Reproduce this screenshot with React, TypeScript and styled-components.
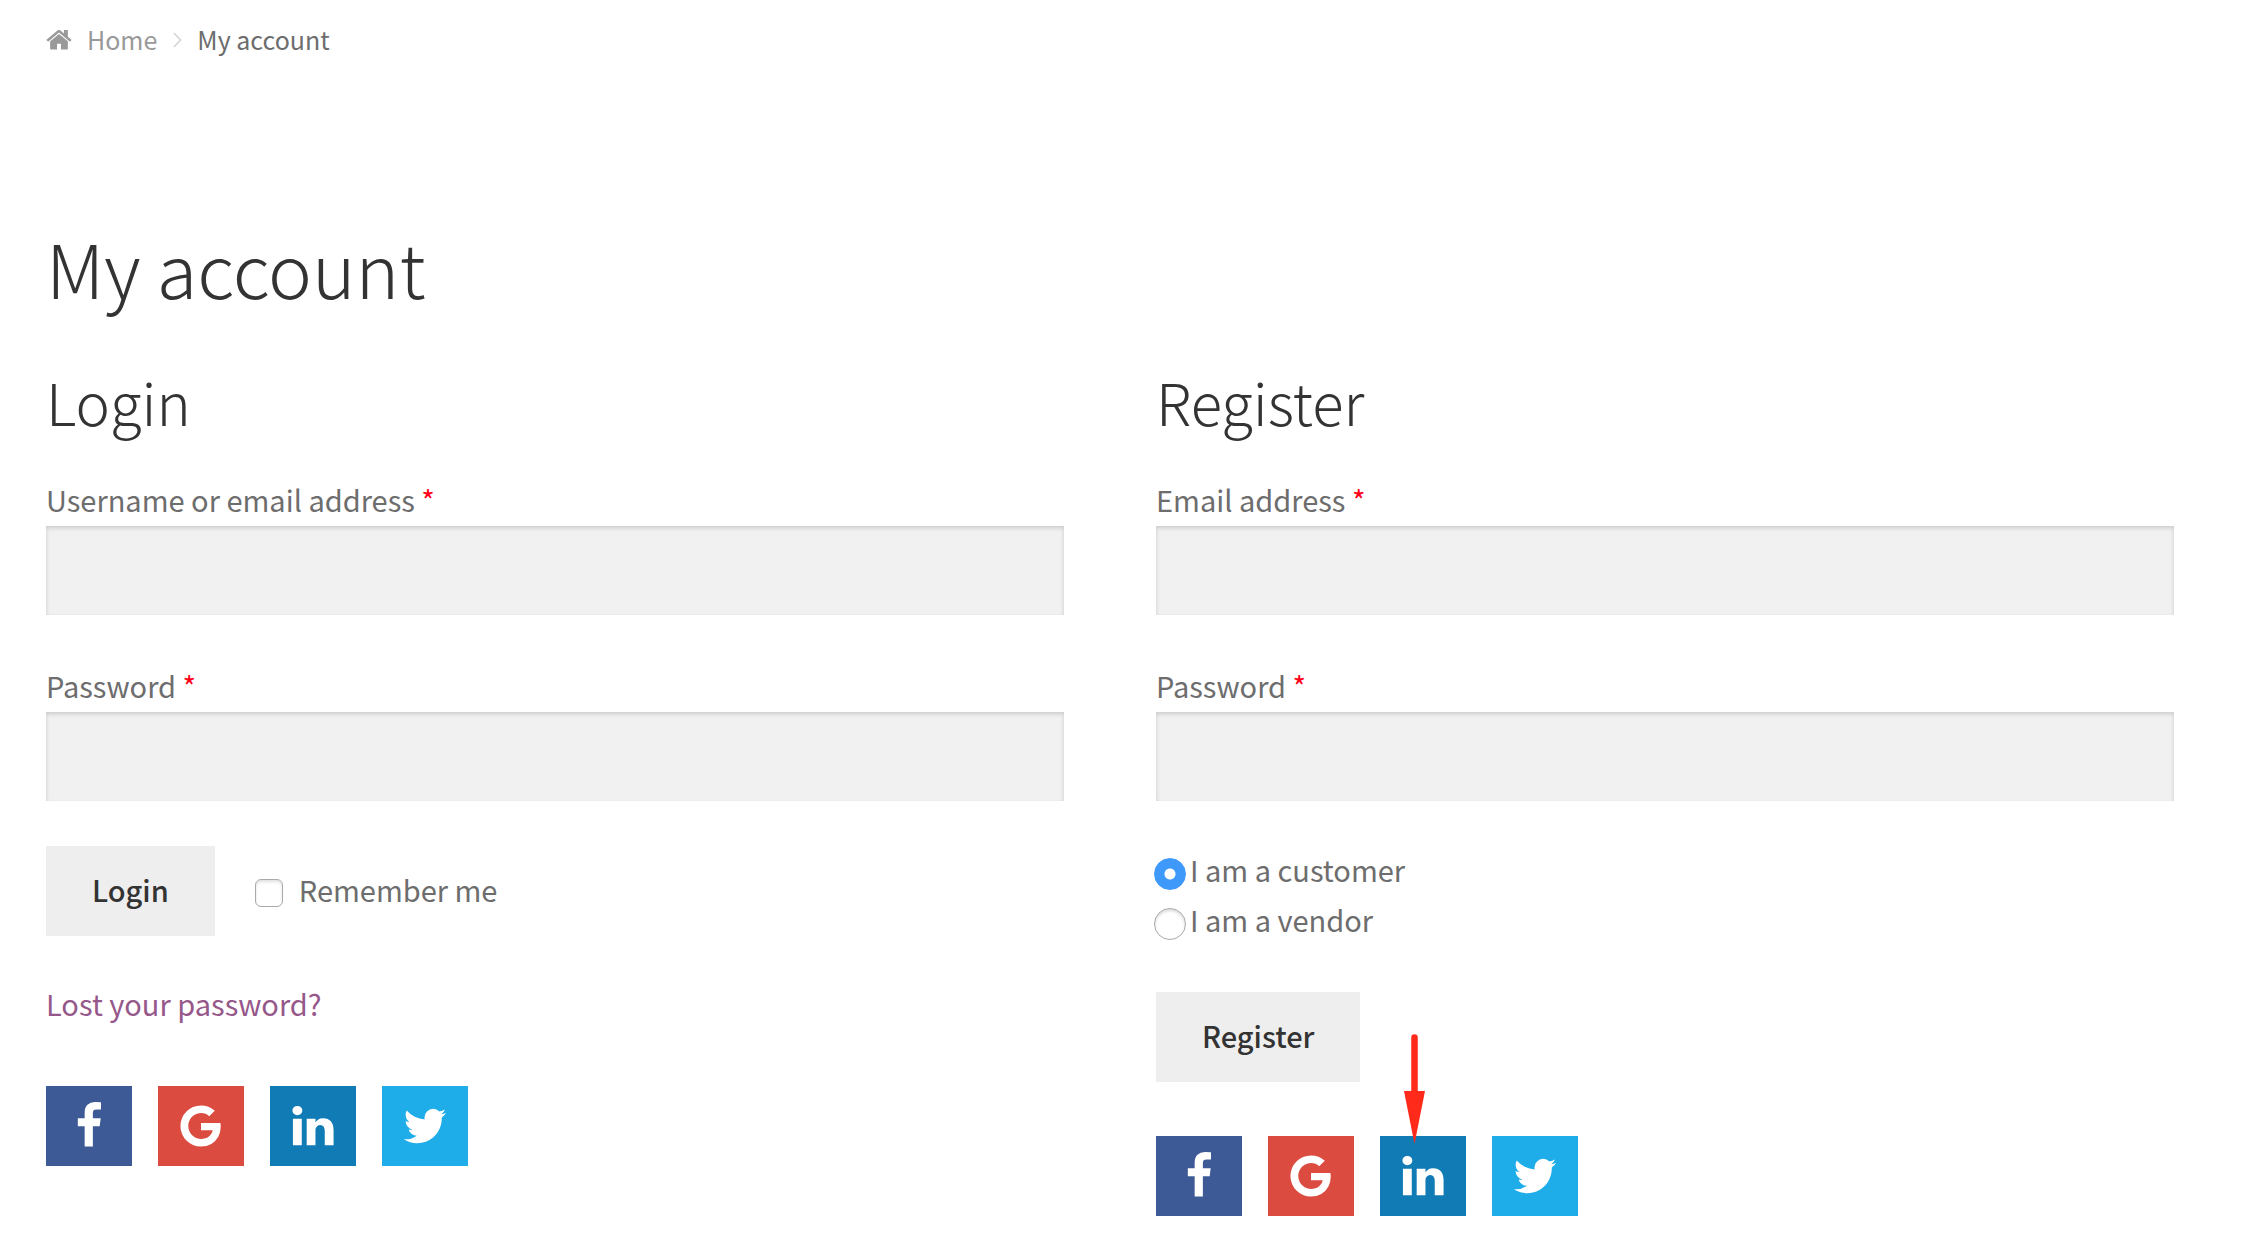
import React from "react";
import styled, { createGlobalStyle } from "styled-components";

const GlobalStyle = createGlobalStyle`
  *, *::before, *::after { box-sizing: border-box; }
  body {
    margin: 0;
    background: #fff;
    color: #6d6d6d;
    font-family: "Noto Sans CJK SC", "Open Sans", sans-serif;
    font-size: 29px;
    line-height: 46px;
  }
`;

const Page = styled.div`
  padding: 19px 86px 40px 46px;
`;

const Breadcrumb = styled.nav`
  display: flex;
  align-items: center;
  font-size: 25px;
  line-height: 40px;
  margin-bottom: 162px;
`;

const HomeLink = styled.a`
  display: flex;
  align-items: center;
  gap: 15px;
  color: #999;
  text-decoration: none;
`;

const HomeIcon = styled.svg`
  margin-top: 2px;
`;

const Separator = styled.svg`
  margin: 2px 15px 0 16px;
`;

const PageTitle = styled.h1`
  margin: 0 0 53px;
  color: #333;
  font-size: 74px;
  font-weight: 300;
  line-height: 92px;
`;

const Columns = styled.main`
  display: grid;
  grid-template-columns: 1fr 1fr;
  gap: 92px;
`;

const SectionTitle = styled.h2`
  margin: 0 0 38px;
  color: #333;
  font-size: 58px;
  font-weight: 300;
  line-height: 70px;
`;

const FieldGroup = styled.div`
  display: flex;
  flex-direction: column;
  margin-bottom: 45px;
`;

const FieldLabel = styled.label`
  line-height: 50px;
  margin-bottom: 2px;
`;

const Required = styled.span`
  color: #ff0018;
`;

const TextInput = styled.input`
  width: 100%;
  height: 89px;
  padding: 0 20px;
  border: 0;
  border-radius: 0;
  background: #f1f1f1;
  box-shadow: inset 0 2px 4px rgba(0, 0, 0, 0.16);
  color: #43454b;
  font: inherit;
`;

const ActionRow = styled.div`
  display: flex;
  align-items: center;
  gap: 40px;
  margin-bottom: 42px;
`;

const SubmitButton = styled.button`
  height: 90px;
  padding: 0 46px 4px;
  border: 0;
  background: #eee;
  color: #333;
  font-family: inherit;
  font-size: 29px;
  font-weight: 500;
  line-height: 46px;
`;

const CheckLabel = styled.label`
  display: flex;
  align-items: center;
  gap: 16px;
  padding-bottom: 4px;
`;

const CheckBox = styled.input`
  appearance: none;
  width: 28px;
  height: 28px;
  margin: 8px 0 0;
  border: 1px solid #aaa;
  border-radius: 6px;
  background: #fff;
  box-shadow: inset 0 2px 3px rgba(0, 0, 0, 0.12);
`;

const RadioList = styled.div`
  display: flex;
  flex-direction: column;
  gap: 4px;
  margin-bottom: 50px;
`;

const RadioLabel = styled.label`
  display: flex;
  align-items: flex-start;
  gap: 4px;
  margin-left: -2px;
`;

const RadioInput = styled.input`
  appearance: none;
  width: 32px;
  height: 32px;
  margin: 12px 0 0;
  border: 1px solid #aaa;
  border-radius: 50%;
  background: #fff;
  box-shadow: inset 0 2px 3px rgba(0, 0, 0, 0.15);

  &:checked {
    border-color: #3f99fb;
    background: radial-gradient(circle, #fff 5px, #3f99fb 6px);
    box-shadow: none;
  }
`;

const LostLink = styled.a`
  display: block;
  width: fit-content;
  color: #96588a;
  line-height: 50px;
  margin-bottom: 58px;
  text-decoration: none;
`;

const SocialRow = styled.div<{ $top?: number }>`
  display: flex;
  gap: 26px;
  margin-top: ${(p) => p.$top ?? 0}px;
`;

const SocialLink = styled.a<{ $color: string }>`
  position: relative;
  display: flex;
  align-items: center;
  justify-content: center;
  width: 86px;
  height: 80px;
  background: ${(p) => p.$color};
  color: #fff;
`;

const Pointer = styled.svg`
  position: absolute;
  left: 24px;
  top: -102px;
`;

const networks = [
  {
    name: "Facebook",
    color: "#3d5a96",
    path: "M1343 12v264h-157q-86 0-116 36t-30 108v189h293l-39 296h-254v759h-306v-759h-255v-296h255v-218q0-186 104-288.5t277-102.5q147 0 228 12z",
  },
  {
    name: "Google",
    color: "#db4b3f",
    path: "M896 786h725q12 67 12 128 0 217-91 387.5t-259.5 266.5-386.5 96q-157 0-299-60.5t-245-163.5-163.5-245-60.5-299 60.5-299 163.5-245 245-163.5 299-60.5q300 0 515 201l-209 201q-123-119-306-119-129 0-238.5 65t-173.5 176.5-64 243.5 64 243.5 173.5 176.5 238.5 65q87 0 160-24t120-60 82-82 51.5-87 22.5-78h-436v-264z",
  },
  {
    name: "LinkedIn",
    color: "#117bb5",
    path: "M477 625v991h-330v-991h330zm21-306q1 73-50.5 122t-135.5 49h-2q-82 0-132-49t-50-122q0-74 51.5-122.5t134.5-48.5 133 48.5 51 122.5zm1166 729v568h-329v-530q0-105-40.5-164.5t-126.5-59.5q-63 0-105.5 34.5t-63.5 85.5q-11 30-11 81v553h-329q2-399 2-647t-1-296l-1-48h329v144h-2q20-32 41-56t56.5-52 87-43.5 114.5-15.5q171 0 275 113.5t104 332.5z",
  },
  {
    name: "Twitter",
    color: "#1fadea",
    path: "M1684 408q-67 98-162 167 1 14 1 42 0 130-38 259.5t-115.5 248.5-184.5 210.5-258 146-323 54.5q-271 0-496-145 35 4 78 4 225 0 401-138-105-2-188-64.5t-114-159.5q33 5 61 5 43 0 85-11-112-23-185.5-111.5t-73.5-205.5v-4q68 38 146 41-66-44-105-115t-39-154q0-88 44-163 121 149 294.5 238.5t371.5 99.5q-8-38-8-74 0-134 94.5-228.5t228.5-94.5q140 0 236 102 109-21 205-78-37 115-142 178 93-10 186-50z",
  },
];

function SocialButtons({ top, highlight }: { top?: number; highlight?: string }) {
  return (
    <SocialRow $top={top}>
      {networks.map((n) => (
        <SocialLink key={n.name} href="#" aria-label={n.name} $color={n.color}>
          <svg width="48" height="48" viewBox="0 0 1792 1792" fill="currentColor" aria-hidden="true">
            <path d={n.path} />
          </svg>
          {highlight === n.name && (
            <Pointer width="21" height="110" viewBox="0 0 21 110" aria-hidden="true">
              <path d="M10.5 3.5V60" stroke="#ff2a1a" strokeWidth="6.5" strokeLinecap="round" />
              <path d="M0 57H21L10.5 110Z" fill="#ff2a1a" />
            </Pointer>
          )}
        </SocialLink>
      ))}
    </SocialRow>
  );
}

function Field({ id, label, type }: { id: string; label: string; type: string }) {
  return (
    <FieldGroup>
      <FieldLabel htmlFor={id}>
        {label} <Required>*</Required>
      </FieldLabel>
      <TextInput id={id} type={type} />
    </FieldGroup>
  );
}

export default function App() {
  return (
    <>
      <GlobalStyle />
      <Page>
        <Breadcrumb aria-label="Breadcrumb">
          <HomeLink href="#">
            <HomeIcon width="26" height="22" viewBox="50 220 1692 1380" fill="currentColor" aria-hidden="true">
              <path d="M1472 992v480q0 26-19 45t-45 19h-384v-384h-256v384h-384q-26 0-45-19t-19-45v-480q0-1 .5-3t.5-3l575-474 575 474q1 2 1 6zm223-69l-62 74q-8 9-21 11h-3q-13 0-21-7l-692-577-692 577q-12 8-24 7-13-2-21-11l-62-74q-8-10-7-23.5t11-21.5l719-599q32-26 76-26t76 26l244 204v-195q0-14 9-23t23-9h192q14 0 23 9t9 23v408l219 182q10 8 11 21.5t-7 23.5z" />
            </HomeIcon>
            Home
          </HomeLink>
          <Separator width="9" height="16" viewBox="0 0 9 16" aria-hidden="true">
            <path d="M1 1L7.5 8L1 15" fill="none" stroke="#d6d6d6" strokeWidth="1.7" />
          </Separator>
          <span>My account</span>
        </Breadcrumb>

        <PageTitle>My account</PageTitle>

        <Columns>
          <section>
            <SectionTitle>Login</SectionTitle>
            <form onSubmit={(e) => e.preventDefault()}>
              <Field id="login-username" label="Username or email address" type="text" />
              <Field id="login-password" label="Password" type="password" />
              <ActionRow>
                <SubmitButton type="submit">Login</SubmitButton>
                <CheckLabel>
                  <CheckBox type="checkbox" />
                  Remember me
                </CheckLabel>
              </ActionRow>
              <LostLink href="#">Lost your password?</LostLink>
            </form>
            <SocialButtons />
          </section>

          <section>
            <SectionTitle>Register</SectionTitle>
            <form onSubmit={(e) => e.preventDefault()}>
              <Field id="register-email" label="Email address" type="email" />
              <Field id="register-password" label="Password" type="password" />
              <RadioList role="radiogroup" aria-label="Account type">
                <RadioLabel>
                  <RadioInput type="radio" name="role" value="customer" defaultChecked />
                  I am a customer
                </RadioLabel>
                <RadioLabel>
                  <RadioInput type="radio" name="role" value="vendor" />
                  I am a vendor
                </RadioLabel>
              </RadioList>
              <SubmitButton type="submit">Register</SubmitButton>
            </form>
            <SocialButtons top={54} highlight="LinkedIn" />
          </section>
        </Columns>
      </Page>
    </>
  );
}
